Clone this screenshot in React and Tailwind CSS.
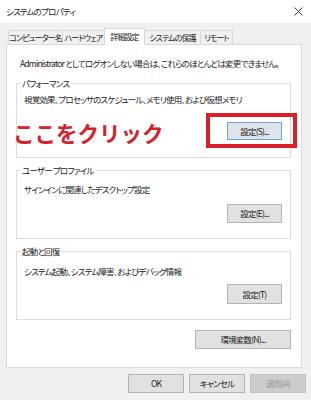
import React from 'react';

const font = "font-['Noto_Sans_CJK_JP',sans-serif] [font-feature-settings:'palt'] tracking-[-0.8px]";

const tabs = [
  { label: 'コンピューター名', w: 'w-[55px]' },
  { label: 'ハードウェア', w: 'w-[43px]' },
  { label: '詳細設定', w: 'w-[41px]', active: true },
  { label: 'システムの保護', w: 'w-[57px]' },
  { label: 'リモート', w: 'w-[33px]' },
];

const Button = ({ children, className = '', focused, disabled }) => (
  <div
    className={`flex items-center justify-center text-[8.5px] leading-none border whitespace-nowrap ${
      focused
        ? 'bg-[#dfe4ea] border-[#6fa3d8] text-[#222]'
        : disabled
        ? 'bg-[#cccccc] border-[#c4c4c4] text-[#9a9a9a]'
        : 'bg-[#e1e1e1] border-[#b4b4b4] text-[#222]'
    } ${className}`}
  >
    {children}
  </div>
);

const Group = ({ title, desc, height, pt, gap, button, btnH }) => (
  <div className={`relative ml-[9px] w-[275px] ${height} border border-[#dcdcdc] flex flex-col ${pt}`}>
    <span className="absolute -top-[7px] left-[3px] bg-white px-[2px] text-[8.5px] leading-[12px] text-[#222] whitespace-nowrap">
      {title}
    </span>
    <div className="pl-[7px] text-[8.5px] leading-[12px] text-[#222] whitespace-nowrap">{desc}</div>
    <div className={`flex justify-end pr-[8px] ${gap}`}>
      <Button className={`w-[55px] ${btnH}`} focused={button.focused}>
        {button.label}
      </Button>
    </div>
  </div>
);

export default function App() {
  return (
    <div className={`relative w-[311px] h-[400px] bg-[#f0f0f0] overflow-hidden ${font}`}>
      {/* Title bar */}
      <div className="h-[23px] bg-white flex items-center justify-between pl-[6px] pr-[7px]">
        <span className="text-[8.5px] text-[#222]">システムのプロパティ</span>
        <svg width="9" height="9" viewBox="0 0 9 9" className="mr-[1px]">
          <path d="M0.5 0.5 L8.5 8.5 M8.5 0.5 L0.5 8.5" stroke="#444" strokeWidth="1" fill="none" />
        </svg>
      </div>

      {/* Tabs */}
      <div className="flex items-end pl-[8px] pt-[4px] h-[21px] relative z-10">
        {tabs.map((t) =>
          t.active ? (
            <div
              key={t.label}
              className={`${t.w} shrink-0 h-[17px] bg-white border border-b-0 border-[#d9d9d9] -mb-[1px] -ml-[1px] flex items-center justify-center text-[8px] tracking-[-0.9px] text-[#222] whitespace-nowrap overflow-hidden`}
            >
              {t.label}
            </div>
          ) : (
            <div
              key={t.label}
              className={`${t.w} shrink-0 h-[14px] border border-b-0 border-[#d9d9d9] -ml-[1px] first:ml-0 flex items-center justify-center text-[8px] tracking-[-0.9px] text-[#222] bg-[#f0f0f0] whitespace-nowrap overflow-hidden`}
            >
              {t.label}
            </div>
          )
        )}
      </div>

      {/* Panel */}
      <div className="ml-[6px] w-[296px] h-[324px] bg-white border border-[#d9d9d9] flex flex-col">
        <div className="mt-[12px] pl-[13px] text-[8.5px] leading-[12px] text-[#222] whitespace-nowrap">
          Administrator としてログオンしない場合は、これらのほとんどは変更できません。
        </div>
        <div className="mt-[14px]">
          <Group
            title="パフォーマンス"
            desc="視覚効果、プロセッサのスケジュール、メモリ使用、および仮想メモリ"
            height="h-[75px]"
            pt="pt-[9px]"
            gap="mt-[17px]"
            btnH="h-[18px]"
            button={{ label: '設定(S)...', focused: true }}
          />
        </div>
        <div className="mt-[12px]">
          <Group
            title="ユーザー プロファイル"
            desc="サインインに関連したデスクトップ設定"
            height="h-[69px]"
            pt="pt-[12px]"
            gap="mt-[9px]"
            btnH="h-[19px]"
            button={{ label: '設定(E)...' }}
          />
        </div>
        <div className="mt-[12px]">
          <Group
            title="起動と回復"
            desc="システム起動、システム障害、およびデバッグ情報"
            height="h-[69px]"
            pt="pt-[13px]"
            gap="mt-[7px]"
            btnH="h-[20px]"
            button={{ label: '設定(T)' }}
          />
        </div>
        <div className="flex justify-end pr-[10px] mt-[10px]">
          <Button className="w-[96px] h-[19px]">環境変数(N)...</Button>
        </div>
      </div>

      {/* Dialog buttons */}
      <div className="flex justify-end gap-[5px] pr-[5px] mt-[6px]">
        <Button className="w-[56px] h-[19px]">OK</Button>
        <Button className="w-[56px] h-[19px]">キャンセル</Button>
        <Button className="w-[56px] h-[19px]" disabled>
          適用(A)
        </Button>
      </div>

      {/* Annotation overlay */}
      <div className="absolute left-[206px] top-[113px] w-[91px] h-[35px] border-[4px] border-[#d8202b]" />
      <div className="absolute left-[13px] top-[118px] text-[21.5px] leading-[30px] font-bold tracking-normal [font-feature-settings:normal] text-[#d8202b] whitespace-nowrap">
        ここをクリック
      </div>
    </div>
  );
}
